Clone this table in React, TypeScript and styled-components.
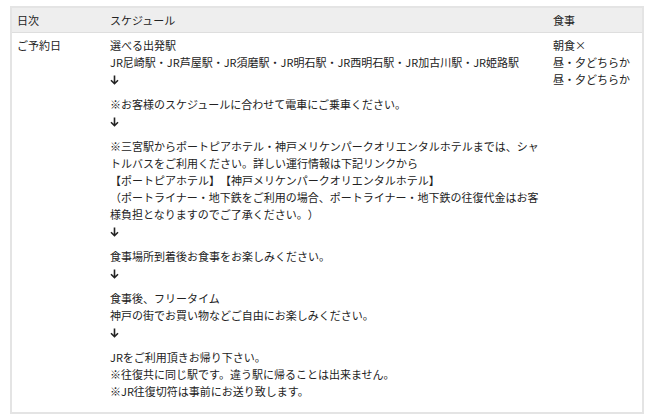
import React from "react";
import styled, { createGlobalStyle } from "styled-components";

const Global = createGlobalStyle`
  html, body { margin: 0; padding: 0; background: #fff; }
  body {
    font-family: "Noto Sans CJK JP", "Noto Sans", sans-serif;
    color: #222;
    text-spacing-trim: space-all;
  }
  *, *::before, *::after { box-sizing: border-box; }
`;

const Page = styled.div`
  padding: 6px 6px 0 10px;
`;

const Table = styled.table`
  width: 634px;
  border-collapse: collapse;
  border: 2px solid #e4e4e4;
  font-size: 11px;
  line-height: 17px;
  table-layout: fixed;
`;

const HeadCell = styled.th<{ $w?: number }>`
  background: #eeeeee;
  font-weight: 400;
  text-align: left;
  padding: 4px 6px 3px 5px;
  border-bottom: 1px solid #dedede;
  ${(p) => (p.$w ? `width: ${p.$w}px;` : "")}
`;

const Cell = styled.td`
  vertical-align: top;
  padding: 4px 6px 4px 5px;
`;

const Para = styled.p`
  margin: 0 0 8px;
`;

const Line = styled.span`
  display: block;
`;

const ArrowLine = styled.span`
  display: flex;
  align-items: center;
  height: 17px;
`;

const Arrow = () => (
  <svg width="9" height="10" viewBox="0 0 9 10">
    <path d="M4.5 0.5 V8.5 M1 5.2 L4.5 8.7 L8 5.2" stroke="#222" strokeWidth="1.6" fill="none" />
  </svg>
);

const blocks: string[][] = [
  ["選べる出発駅", "JR尼崎駅・JR芦屋駅・JR須磨駅・JR明石駅・JR西明石駅・JR加古川駅・JR姫路駅"],
  ["※お客様のスケジュールに合わせて電車にご乗車ください。"],
  [
    "※三宮駅からポートピアホテル・神戸メリケンパークオリエンタルホテルまでは、シャトルバスをご利用ください。詳しい運行情報は下記リンクから",
    "【ポートピアホテル】【神戸メリケンパークオリエンタルホテル】",
    "（ポートライナー・地下鉄をご利用の場合、ポートライナー・地下鉄の往復代金はお客様負担となりますのでご了承ください。）",
  ],
  ["食事場所到着後お食事をお楽しみください。"],
  ["食事後、フリータイム", "神戸の街でお買い物などご自由にお楽しみください。"],
];

const last = [
  "JRをご利用頂きお帰り下さい。",
  "※往復共に同じ駅です。違う駅に帰ることは出来ません。",
  "※JR往復切符は事前にお送り致します。",
];

export default function App() {
  return (
    <>
      <Global />
      <Page>
        <Table>
          <thead>
            <tr>
              <HeadCell $w={94}>日次</HeadCell>
              <HeadCell $w={443}>スケジュール</HeadCell>
              <HeadCell>食事</HeadCell>
            </tr>
          </thead>
          <tbody>
            <tr>
              <Cell>ご予約日</Cell>
              <Cell>
                {blocks.map((b, i) => (
                  <Para key={i}>
                    {b.map((l, j) => (
                      <Line key={j}>{l}</Line>
                    ))}
                    <ArrowLine>
                      <Arrow />
                    </ArrowLine>
                  </Para>
                ))}
                <Para>
                  {last.map((l, j) => (
                    <Line key={j}>{l}</Line>
                  ))}
                </Para>
              </Cell>
              <Cell>
                <Line>朝食×</Line>
                <Line>昼・夕どちらか</Line>
                <Line>昼・夕どちらか</Line>
              </Cell>
            </tr>
          </tbody>
        </Table>
      </Page>
    </>
  );
}
